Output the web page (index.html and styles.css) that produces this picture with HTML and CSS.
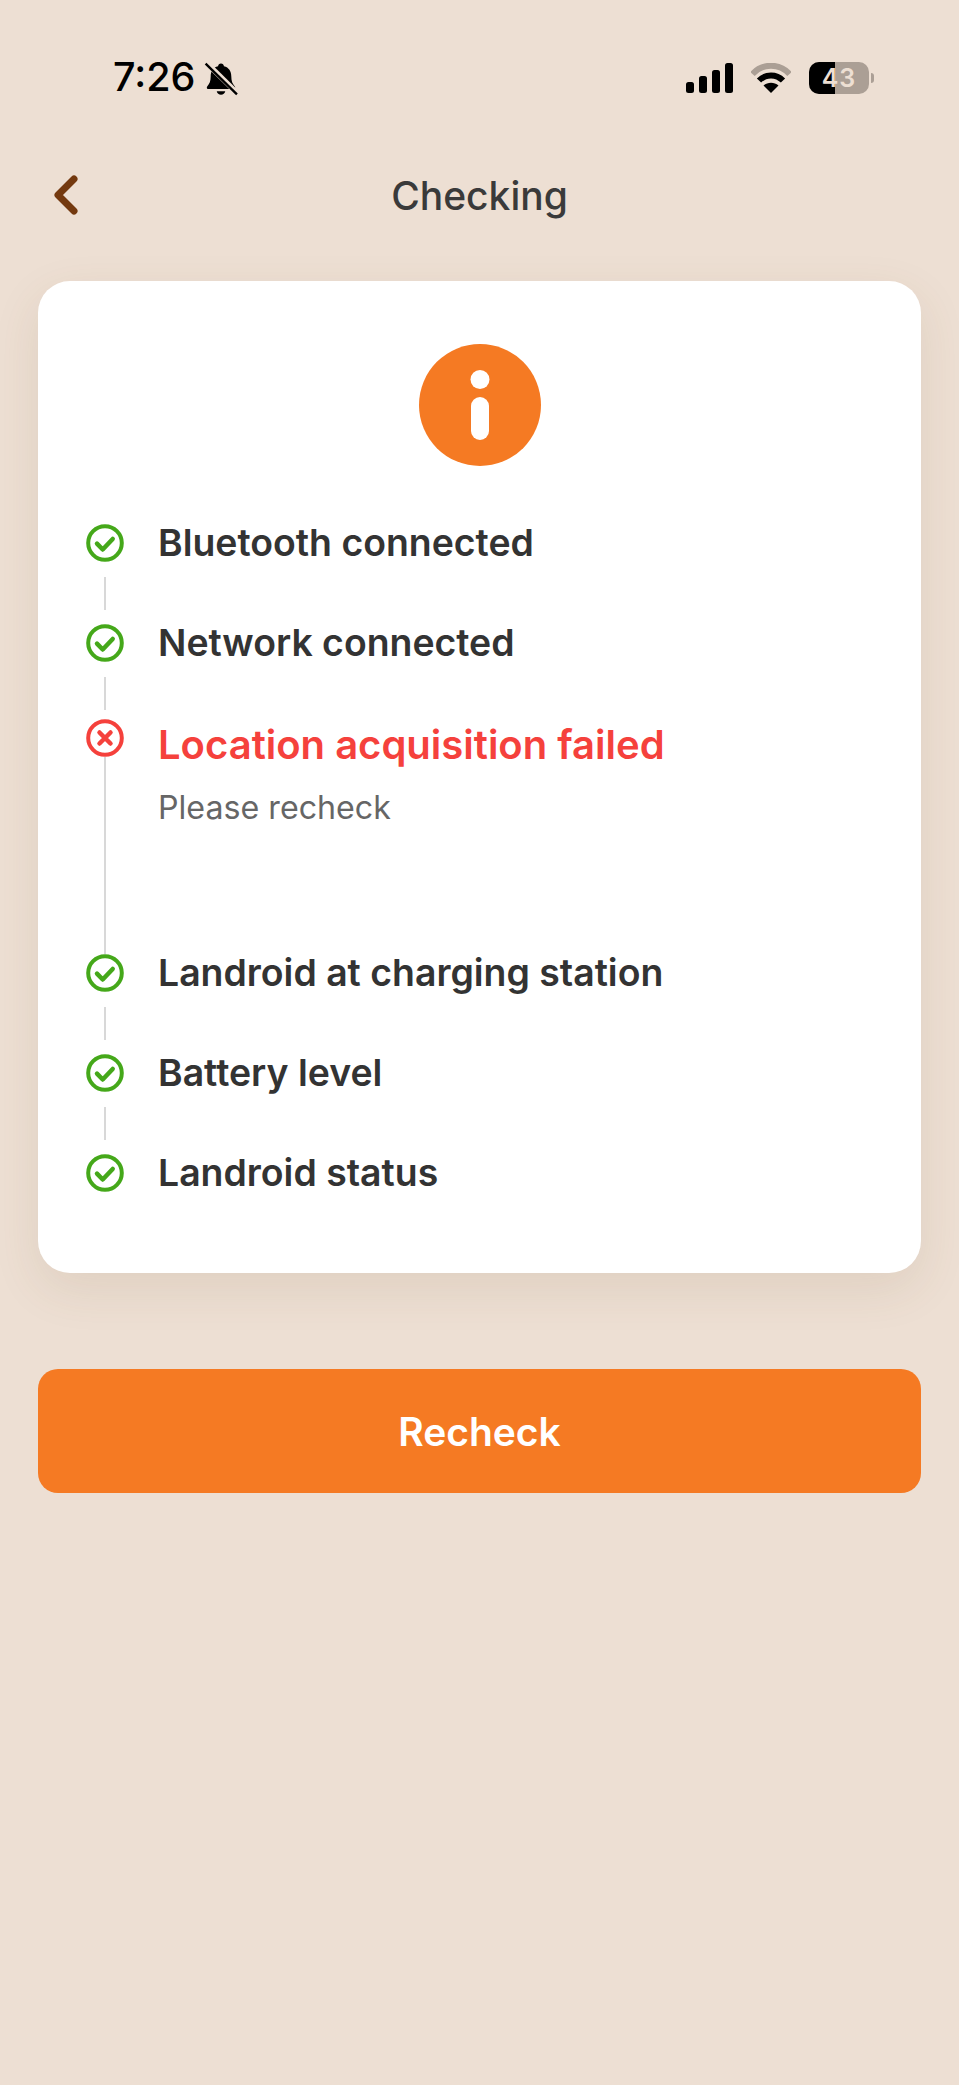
FILE: index.html
```html
<!DOCTYPE html>
<html lang="en">
<head>
<meta charset="utf-8">
<title>Checking</title>
<link rel="stylesheet" href="styles.css">
</head>
<body>
<div class="page">
  <div class="status">
    <div class="status-left">
      <span class="time">7:26</span>
      <svg class="bell" viewBox="0 0 32 32"><path d="M16 1.500c1.600 0 2.600 1.100 2.800 2.600 4.600 1.100 6.900 4.800 6.900 9.600 0 4.300 1 6.800 3.300 9.300.8 1 .2 2.500-1.200 2.500H4.200c-1.400 0-2-1.500-1.200-2.500 2.300-2.500 3.300-5 3.300-9.300 0-4.800 2.300-8.500 6.900-9.600.2-1.500 1.200-2.600 2.800-2.600z" fill="#000"/><path d="M12 27.500h8c-.4 2-2 3.300-4 3.300s-3.600-1.300-4-3.300z" fill="#000"/><path d="M1.500 0 32 30" stroke="#eddfd3" stroke-width="5"/><path d="M1.500 1.500 31 30.500" stroke="#000" stroke-width="2.200"/></svg>
    </div>
    <div class="status-right">
      <svg class="signal" viewBox="0 0 47 30"><rect x="0" y="19" width="8" height="11" rx="2.500"/><rect x="13" y="13" width="8" height="17" rx="2.500"/><rect x="26" y="7" width="8" height="23" rx="2.500"/><rect x="39" y="0" width="8" height="30" rx="2.500"/></svg>
      <svg class="wifi" viewBox="0 0 40 30"><path d="M1.500 11C11.500 0 28.500 0 38.500 11" fill="none" stroke="#ab9f95" stroke-width="6"/><path d="M8 17.500c6.800-6.800 17.200-6.800 24 0" fill="none" stroke="#000" stroke-width="6"/><path d="M20 30l-7.500-7.500c4.300-3.800 10.700-3.800 15 0z" fill="#000"/></svg>
      <div class="battery">
        <div class="battery-body"><span class="battery-fill"></span><span class="battery-num">43</span></div>
        <span class="battery-cap"></span>
      </div>
    </div>
  </div>

  <header class="nav">
    <svg class="back" viewBox="0 0 24 40"><path d="M20 4 4 20l16 16" fill="none" stroke="#74390f" stroke-width="7" stroke-linecap="round" stroke-linejoin="round"/></svg>
    <h1 class="title">Checking</h1>
  </header>

  <main class="card">
    <svg class="info" viewBox="0 0 122 122"><circle cx="61" cy="61" r="61" fill="#f57a23"/><circle cx="61" cy="35.500" r="9.500" fill="#fff"/><rect x="52" y="53" width="18" height="43" rx="9" fill="#fff"/></svg>
    <ul class="steps">
      <li class="step">
        <div class="rail"><svg class="icon" viewBox="0 0 38 38"><circle cx="19" cy="19" r="16.800" fill="none" stroke="#45a81a" stroke-width="4"/><path d="M11 19.700l5.700 5.800 10-10.500" fill="none" stroke="#45a81a" stroke-width="4.500" stroke-linecap="round" stroke-linejoin="round"/></svg><span class="line"></span></div>
        <div class="text"><span class="label">Bluetooth connected</span></div>
      </li>
      <li class="step step-short">
        <div class="rail"><svg class="icon" viewBox="0 0 38 38"><circle cx="19" cy="19" r="16.800" fill="none" stroke="#45a81a" stroke-width="4"/><path d="M11 19.700l5.700 5.800 10-10.500" fill="none" stroke="#45a81a" stroke-width="4.500" stroke-linecap="round" stroke-linejoin="round"/></svg><span class="line"></span></div>
        <div class="text"><span class="label">Network connected</span></div>
      </li>
      <li class="step step-failed">
        <div class="rail"><svg class="icon" viewBox="0 0 38 38"><circle cx="19" cy="19" r="16.800" fill="none" stroke="#f5413c" stroke-width="4"/><path d="M13.500 13.500l11 11M24.500 13.500l-11 11" fill="none" stroke="#f5413c" stroke-width="4.500" stroke-linecap="round"/></svg><span class="line line-long"></span></div>
        <div class="text"><span class="label label-failed">Location acquisition failed</span><span class="hint">Please recheck</span></div>
      </li>
      <li class="step">
        <div class="rail"><svg class="icon" viewBox="0 0 38 38"><circle cx="19" cy="19" r="16.800" fill="none" stroke="#45a81a" stroke-width="4"/><path d="M11 19.700l5.700 5.800 10-10.500" fill="none" stroke="#45a81a" stroke-width="4.500" stroke-linecap="round" stroke-linejoin="round"/></svg><span class="line"></span></div>
        <div class="text"><span class="label">Landroid at charging station</span></div>
      </li>
      <li class="step">
        <div class="rail"><svg class="icon" viewBox="0 0 38 38"><circle cx="19" cy="19" r="16.800" fill="none" stroke="#45a81a" stroke-width="4"/><path d="M11 19.700l5.700 5.800 10-10.500" fill="none" stroke="#45a81a" stroke-width="4.500" stroke-linecap="round" stroke-linejoin="round"/></svg><span class="line"></span></div>
        <div class="text"><span class="label">Battery level</span></div>
      </li>
      <li class="step step-last">
        <div class="rail"><svg class="icon" viewBox="0 0 38 38"><circle cx="19" cy="19" r="16.800" fill="none" stroke="#45a81a" stroke-width="4"/><path d="M11 19.700l5.700 5.800 10-10.500" fill="none" stroke="#45a81a" stroke-width="4.500" stroke-linecap="round" stroke-linejoin="round"/></svg></div>
        <div class="text"><span class="label">Landroid status</span></div>
      </li>
    </ul>
  </main>

  <button class="recheck" type="button">Recheck</button>
</div>
</body>
</html>
```
FILE: styles.css
```css
* { box-sizing: border-box; }
html, body { margin: 0; padding: 0; }
body {
  background: #eddfd3;
  font-family: Inter, "Liberation Sans", sans-serif;
  color: #333;
}
.page {
  width: 959px;
  height: 2085px;
  padding: 0 38px;
  overflow: hidden;
}
.status {
  height: 100px;
  margin: 0 -38px;
  padding: 54px 85px 0 113px;
  display: flex;
  justify-content: space-between;
  align-items: flex-start;
}
.status-left { display: flex; align-items: center; gap: 9px; }
.time {
  font-size: 39.5px;
  line-height: 46px;
  font-weight: 500;
  color: #000;
}
.bell { width: 34px; height: 34px; margin-top: 3px; }
.status-right { display: flex; align-items: center; gap: 18px; padding-top: 8px; }
.signal { width: 47px; height: 30px; fill: #000; }
.wifi { width: 40px; height: 30px; }
.battery { display: flex; align-items: center; gap: 2px; }
.battery-body {
  position: relative;
  width: 60px;
  height: 32px;
  border-radius: 10px;
  background: #ab9f95;
  overflow: hidden;
  display: flex;
  align-items: center;
  justify-content: center;
}
.battery-fill { position: absolute; left: 0; top: 0; bottom: 0; width: 26px; background: #000; }
.battery-num {
  position: relative;
  font-size: 25px;
  font-weight: 600;
  letter-spacing: 1px;
  color: #eddfd3;
}
.battery-cap { width: 3px; height: 10px; border-radius: 0 3px 3px 0; background: #ab9f95; }
.nav {
  position: relative;
  height: 181px;
  display: flex;
  justify-content: center;
  padding-top: 73px;
}
.back { position: absolute; left: 16px; top: 75px; width: 24px; height: 40px; }
.title { margin: 0; font-size: 39px; line-height: 46px; font-weight: 550; color: #3a3a3a; }
.card {
  height: 992px;
  background: #fff;
  border-radius: 32px;
  box-shadow: 0 16px 48px rgba(110, 80, 50, .11);
  padding: 63px 46px 0 48px;
  display: flex;
  flex-direction: column;
  align-items: center;
}
.info { width: 122px; height: 122px; flex: none; margin-left: -2px; }
.steps {
  list-style: none;
  margin: 58px 0 0;
  padding: 0;
  width: 100%;
}
.step { display: flex; gap: 34px; height: 100px; }
.step-short { height: 95px; }
.step-failed { height: 235px; }
.step-last { height: 38px; }
.rail { width: 38px; display: flex; flex-direction: column; align-items: center; flex: none; }
.icon { width: 38px; height: 38px; flex: none; }
.line { width: 2px; height: 33px; margin-top: 15px; background: #d8d8d8; }
.line-long { height: 197px; margin-top: 0; }
.text { display: flex; flex-direction: column; }
.label { font-size: 37.4px; line-height: 38px; font-weight: 570; color: #333; }
.label-failed { font-size: 40px; font-weight: 600; color: #f5413c; margin-top: 7px; }
.hint { margin-top: 25px; font-size: 32.200px; line-height: 38px; font-weight: 400; color: #666; }
.recheck {
  display: block;
  width: 100%;
  height: 124px;
  margin-top: 96px;
  border: 0;
  border-radius: 20px;
  background: #f57a23;
  color: #fff;
  font-family: inherit;
  font-size: 39px;
  font-weight: 600;
}
```
